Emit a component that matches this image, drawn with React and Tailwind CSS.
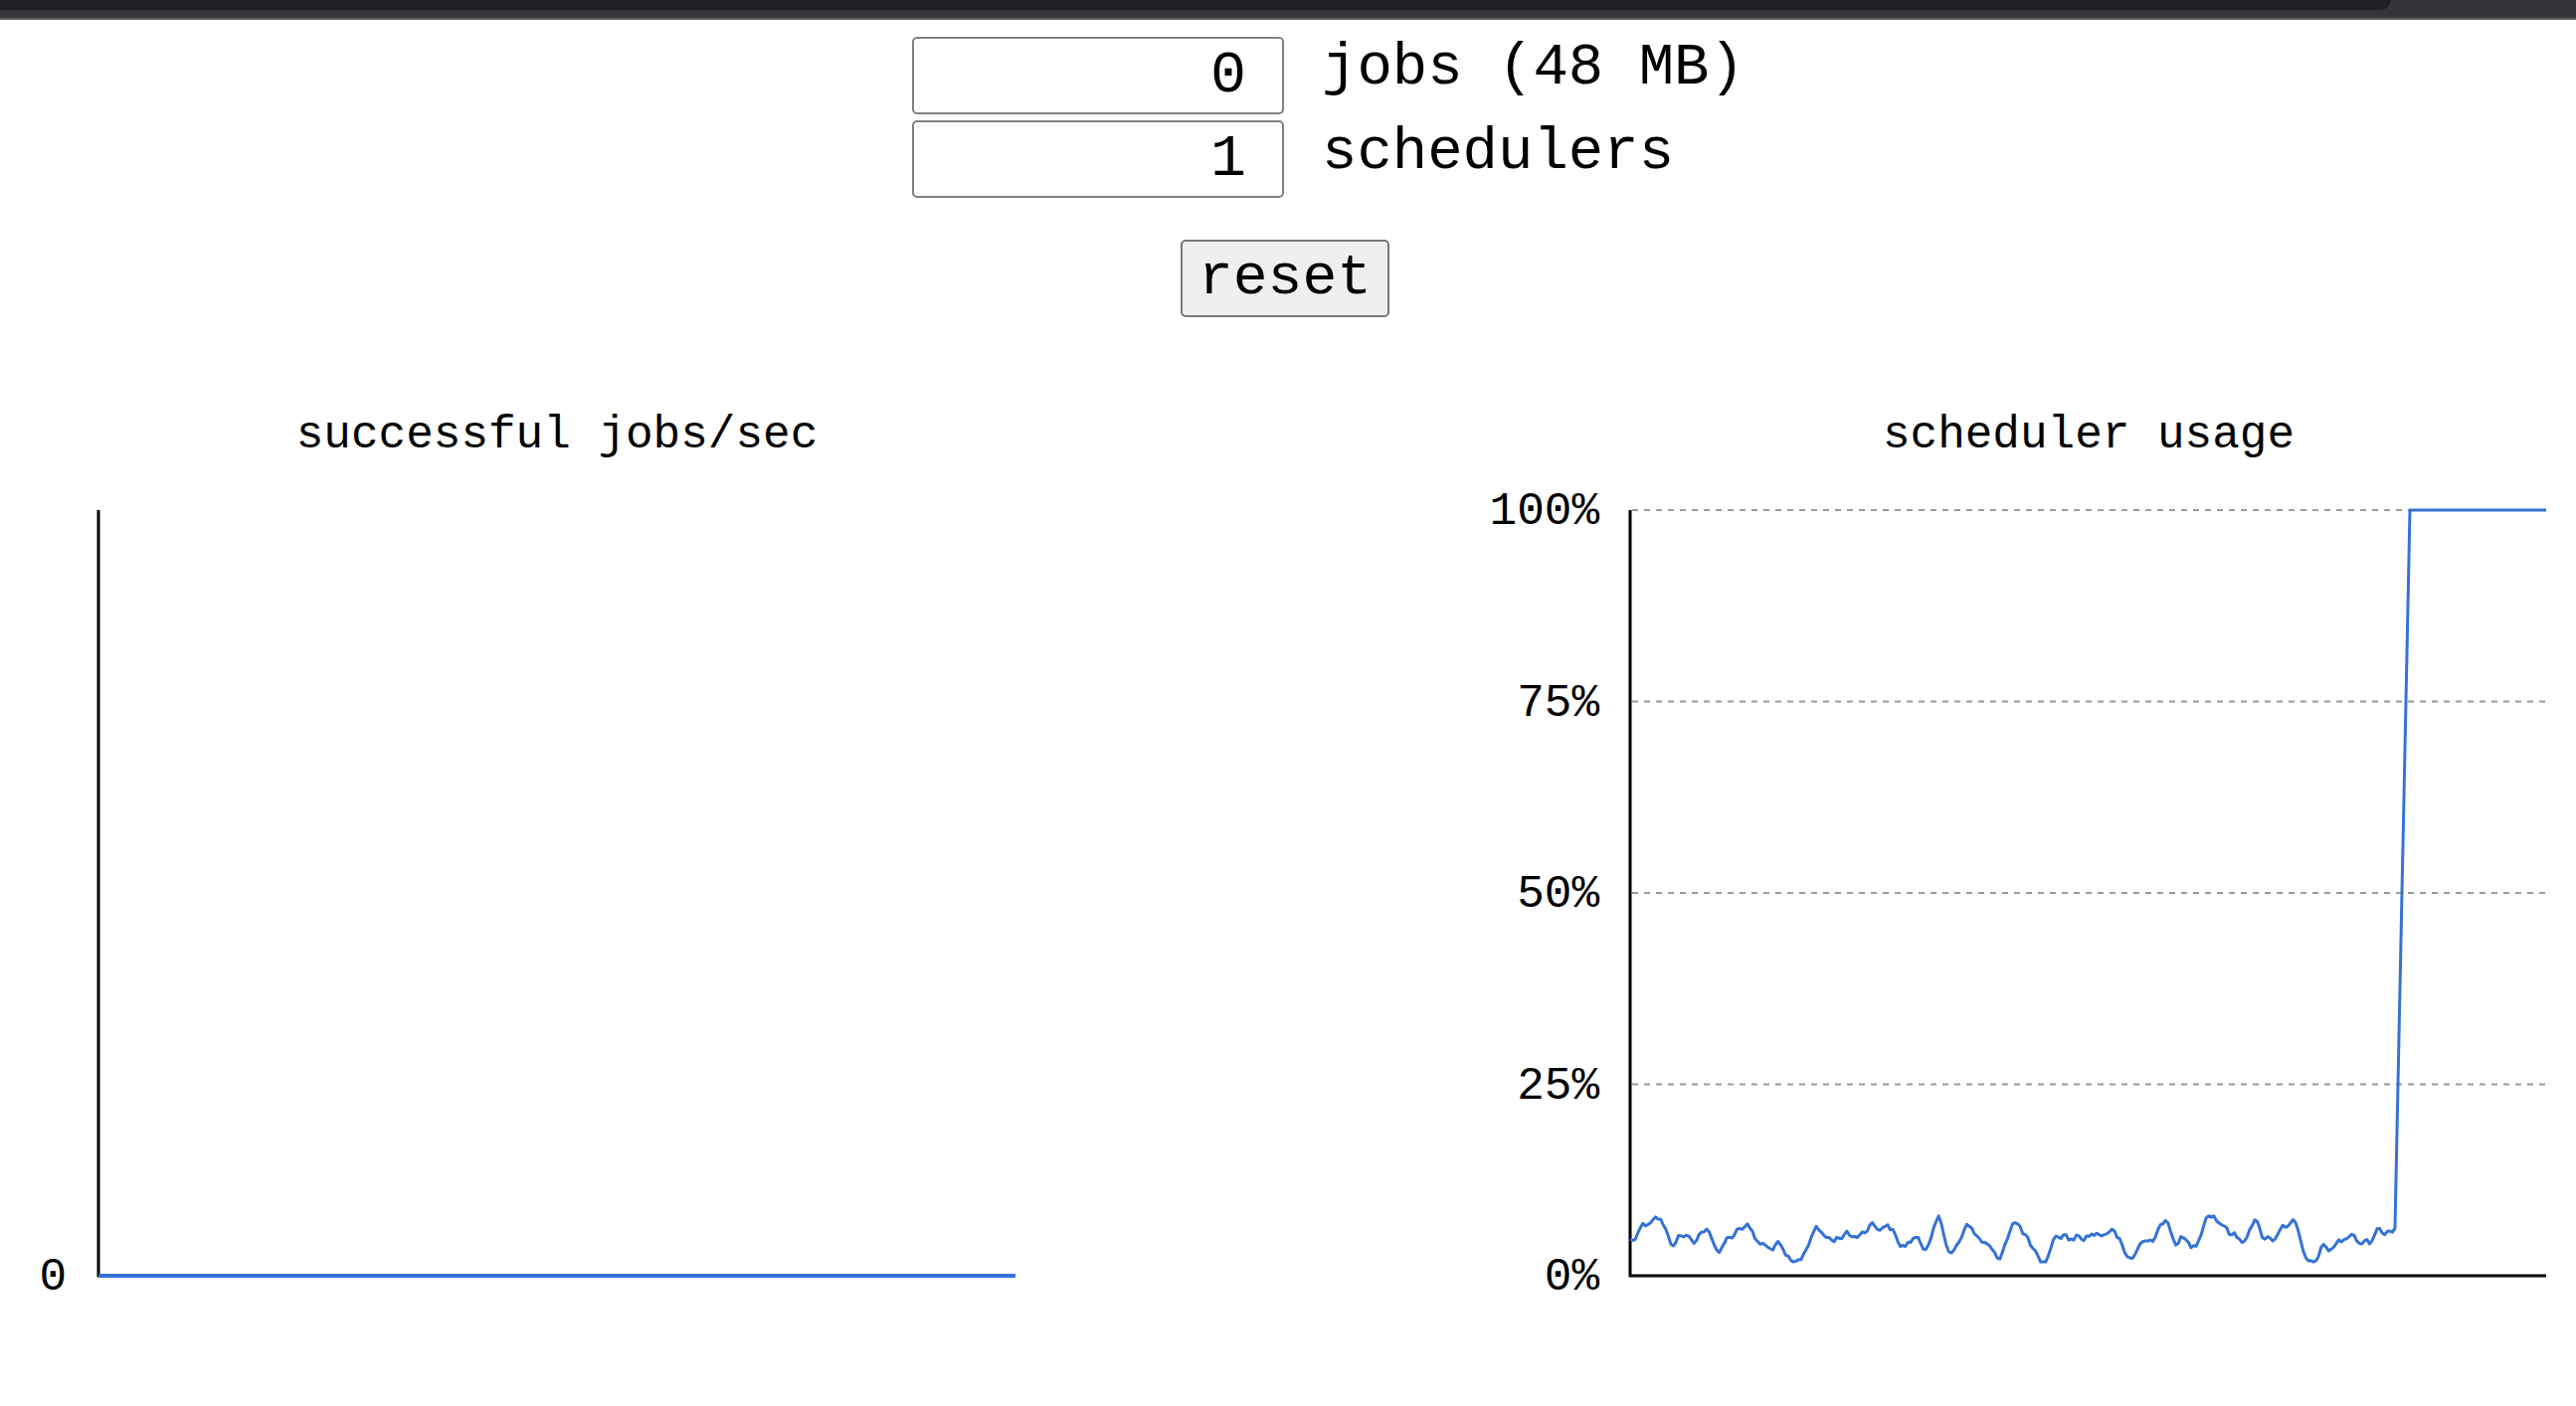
import React from "react";

function makeNoise() {
  let s = 12345;
  const rand = () => {
    s = (s * 1103515245 + 12345) % 2147483648;
    return s / 2147483648;
  };
  const pts = [];
  let v = 4.5;
  let vel = 0;
  const x0 = 179;
  const x1 = 948;
  const n = 300;
  for (let i = 0; i <= n; i++) {
    const x = x0 + ((x1 - x0) * i) / n;
    vel = vel * 0.65 + (rand() - 0.5) * 1.5 + (4.7 - v) * 0.1;
    v += vel;
    if (v < 1.8) { v = 1.8; vel = Math.abs(vel) * 0.5; }
    if (v > 7.8) { v = 7.8; vel = -Math.abs(vel) * 0.5; }
    const y = 883 - (v / 100) * 770;
    pts.push(`${x.toFixed(1)},${y.toFixed(1)}`);
  }
  pts.push(`963,113`);
  pts.push(`1100,113`);
  return pts.join(" ");
}

const noise = makeNoise();
const grid = [113, 305.5, 498, 690.5, 883];
const gridLabels = ["100%", "75%", "50%", "25%", "0%"];

function LeftChart() {
  return (
    <svg width="1060" height="920" className="block shrink-0">
      <text x="560" y="50" textAnchor="middle" fontFamily="'Liberation Mono', monospace" fontSize="46" fill="#000">
        successful jobs/sec
      </text>
      <line x1="99" y1="113" x2="99" y2="884" stroke="#000" strokeWidth="3" />
      <line x1="98" y1="883" x2="1021" y2="883" stroke="#000" strokeWidth="3" />
      <line x1="99" y1="883" x2="1021" y2="883" stroke="#3572d6" strokeWidth="4" />
      <text x="67" y="897" textAnchor="end" fontFamily="'Liberation Mono', monospace" fontSize="46" fill="#000">
        0
      </text>
    </svg>
  );
}

function RightChart() {
  return (
    <svg width="1130" height="920" className="block shrink-0">
      <text x="640" y="50" textAnchor="middle" fontFamily="'Liberation Mono', monospace" fontSize="46" fill="#000">
        scheduler usage
      </text>
      {grid.slice(0, 4).map((y) => (
        <line key={y} x1="181" y1={y} x2="1100" y2={y} stroke="#9a9a9a" strokeWidth="2" strokeDasharray="6 6" />
      ))}
      {grid.map((y, i) => (
        <text key={i} x="148" y={y + 14} textAnchor="end" fontFamily="'Liberation Mono', monospace" fontSize="46" fill="#000">
          {gridLabels[i]}
        </text>
      ))}
      <line x1="179" y1="113" x2="179" y2="884" stroke="#000" strokeWidth="3" />
      <line x1="178" y1="883" x2="1100" y2="883" stroke="#000" strokeWidth="3" />
      <polyline points={noise} fill="none" stroke="#3572d6" strokeWidth="3" strokeLinejoin="round" />
    </svg>
  );
}

export default function App() {
  const mono = "font-['Liberation_Mono',monospace]";
  return (
    <div className="w-[2590px] h-[1414px] bg-white overflow-hidden">
      <div className="h-[20px] bg-[#35363a] border-b-2 border-[#5f6063]">
        <div className="w-[2404px] h-[10px] bg-[#1f2023] rounded-br-[10px]" />
      </div>
      <div className={`flex flex-col items-center pt-[17px] ${mono} text-black`}>
        <div className="w-[756px] flex flex-col gap-[6px]">
          <div className="flex items-start">
            <input
              readOnly
              value="0"
              className="w-[374px] h-[78px] shrink-0 border-2 border-[#808080] rounded-[5px] text-right pr-[36px] text-[60px] font-['Liberation_Mono',monospace] text-black outline-none"
            />
            <span className="ml-[38px] mt-[2px] text-[59px] leading-[60px] whitespace-nowrap">jobs (48 MB)</span>
          </div>
          <div className="flex items-start">
            <input
              readOnly
              value="1"
              className="w-[374px] h-[78px] shrink-0 border-2 border-[#808080] rounded-[5px] text-right pr-[36px] text-[60px] font-['Liberation_Mono',monospace] text-black outline-none"
            />
            <span className="ml-[38px] mt-[3px] text-[59px] leading-[60px] whitespace-nowrap">schedulers</span>
          </div>
        </div>
        <button className="mt-[42px] mr-[6px] h-[78px] px-[16px] bg-[#efefef] border-2 border-[#767676] rounded-[5px] text-[58px] leading-none text-black font-['Liberation_Mono',monospace]">
          reset
        </button>
      </div>
      <div className="mt-[81px] flex justify-between">
        <LeftChart />
        <RightChart />
      </div>
    </div>
  );
}
